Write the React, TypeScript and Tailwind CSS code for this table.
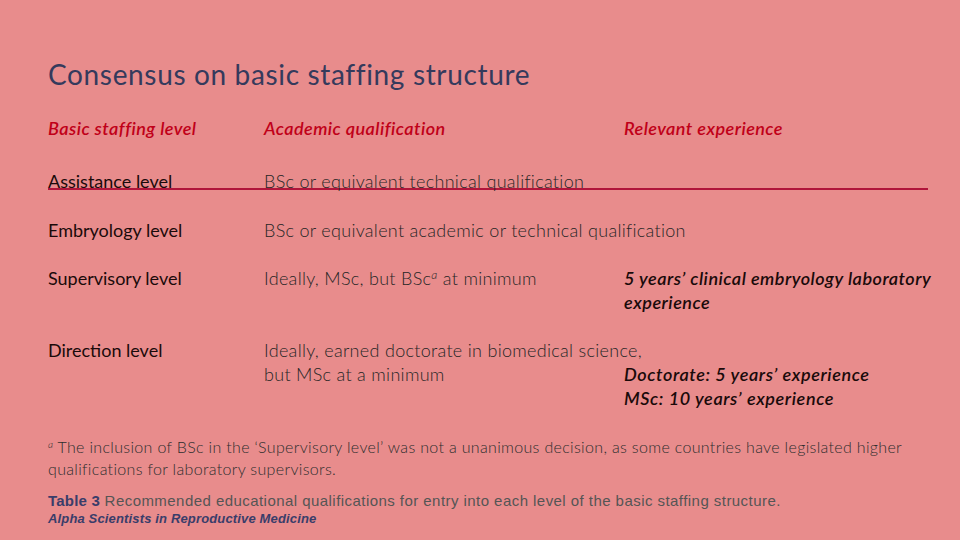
import React from "react";

const body = { fontFamily: "Lato, 'Open Sans', sans-serif" };
const arial = { fontFamily: "'Liberation Sans', Arial, sans-serif" };

export default function App() {
  return (
    <div className="w-[960px] h-[540px] bg-[#e88c8c] overflow-hidden pl-[48px] pr-[24px] pt-[57px]" style={body}>
      <div className="text-[28px] leading-[34px] text-[#353a5c] tracking-[0.65px]">Consensus on basic staffing structure</div>

      <div className="mt-[25px] grid grid-cols-[216px_360px_1fr] text-[18px] leading-[24px] italic font-semibold text-[#c00018] tracking-[0.45px]">
        <div>Basic staffing level</div>
        <div>Academic qualification</div>
        <div>Relevant experience</div>
      </div>

      <div className="mt-[29px] grid grid-cols-[216px_360px_1fr] text-[18px] leading-[24px]">
        <div className="text-[#1a0a0a]">Assistance level</div>
        <div className="col-span-2 font-light text-[#262626] tracking-[0.3px]">BSc or equivalent technical qualification</div>
      </div>
      <div className="-mt-[5px] h-[2px] bg-[#b0153a] w-[880px]" />

      <div className="mt-[28px] grid grid-cols-[216px_360px_1fr] text-[18px] leading-[24px]">
        <div className="text-[#1a0a0a]">Embryology level</div>
        <div className="col-span-2 font-light text-[#262626] tracking-[0.3px]">BSc or equivalent academic or technical qualification</div>
      </div>

      <div className="mt-[24px] grid grid-cols-[216px_360px_1fr] text-[18px] leading-[24px]">
        <div className="text-[#1a0a0a]">Supervisory level</div>
        <div className="font-light text-[#262626] tracking-[0.3px]">
          Ideally, MSc, but BSc<sup className="text-[12px] italic">a</sup> at minimum
        </div>
        <div className="italic font-semibold text-[#1a0a0a] tracking-[0.5px] whitespace-nowrap">
          5 years’ clinical embryology laboratory
          <br />
          experience
        </div>
      </div>

      <div className="mt-[24px] grid grid-cols-[216px_360px_1fr] text-[18px] leading-[24px]">
        <div className="text-[#1a0a0a]">Direction level</div>
        <div className="font-light text-[#262626] tracking-[0.3px] whitespace-nowrap">
          Ideally, earned doctorate in biomedical science,
          <br />
          but MSc at a minimum
        </div>
        <div className="italic font-semibold text-[#1a0a0a] tracking-[0.6px] pt-[24px] whitespace-nowrap">
          Doctorate: 5 years’ experience
          <br />
          MSc: 10 years’ experience
        </div>
      </div>

      <div className="mt-[26px] text-[16px] leading-[22px] font-light text-[#2e2e2e] tracking-[0.33px] whitespace-nowrap">
        <sup className="text-[10px] italic">a</sup> The inclusion of BSc in the ‘Supervisory level’ was not a unanimous decision, as some countries have legislated higher
        <br />
        qualifications for laboratory supervisors.
      </div>

      <div className="mt-[12px] text-[15px] leading-[18px] text-[#555] tracking-[0.45px] whitespace-nowrap" style={arial}>
        <span className="font-bold text-[#3a3d6a] tracking-[0.2px]">Table 3</span> Recommended educational qualifications for entry into each level of the basic staffing structure.
      </div>
      <div className="text-[13px] leading-[18px] italic font-bold text-[#3a3d6a] tracking-[0.15px]" style={arial}>
        Alpha Scientists in Reproductive Medicine
      </div>
    </div>
  );
}
